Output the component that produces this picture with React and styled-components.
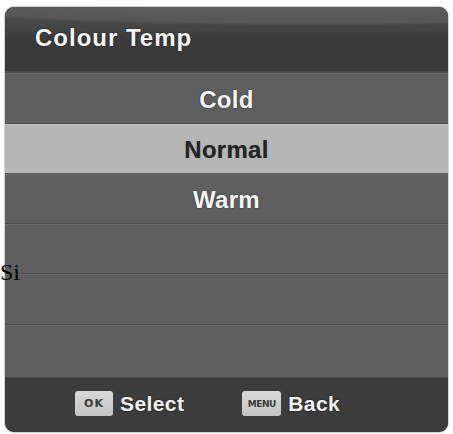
import React from "react";
import styled, { createGlobalStyle } from "styled-components";

const Global = createGlobalStyle`
  html, body { margin: 0; padding: 0; background: #ffffff; }
  body { width: 453px; height: 434px; overflow: hidden; position: relative; }
`;

const Page = styled.div`
  width: 453px;
  height: 434px;
  padding: 7px 5px 2px 5px;
  box-sizing: border-box;
  position: relative;
`;

const Panel = styled.div`
  width: 443px;
  height: 425px;
  border-radius: 9px;
  overflow: hidden;
  display: flex;
  flex-direction: column;
  background: #5f5f5f;
  box-shadow: 0 0 1px 1px rgba(120, 120, 120, 0.35);
  font-family: "Liberation Sans", Arial, sans-serif;
`;

const Header = styled.div`
  height: 66px;
  flex: none;
  display: flex;
  align-items: center;
  padding: 0 0 3px 30px;
  box-sizing: border-box;
  background:
    radial-gradient(ellipse 160% 60% at 70% -8%, #5e5e5e 0%, #575757 55%, rgba(80,80,80,0) 62%),
    linear-gradient(180deg, #505050 0%, #444 35%, #3b3b3b 50%, #393939 100%);
  border-bottom: 2px solid #4d4d4d;
`;

const Title = styled.span`
  color: #f4f4f4;
  font-size: 24px;
  font-weight: bold;
  letter-spacing: 1px;
  text-shadow: 0 0 2px rgba(0, 0, 0, 0.6);
`;

const List = styled.div`
  flex: 1;
  display: flex;
  flex-direction: column;
`;

const Row = styled.div`
  height: ${(p) => p.$h}px;
  flex: none;
  display: flex;
  align-items: center;
  justify-content: center;
  padding-top: 3px;
  box-sizing: border-box;
  background: ${(p) => (p.$active ? "#b6b6b6" : "#5f5f5f")};
  border-bottom: 1px solid ${(p) => (p.$active ? "#5a5a5a" : "#4c4c4c")};
  box-shadow: inset 0 1px 0 ${(p) => (p.$active ? "#c4c4c4" : "#6a6a6a")};
`;

const RowLabel = styled.span`
  font-size: 24px;
  font-weight: bold;
  letter-spacing: 0.3px;
  color: ${(p) => (p.$active ? "#242424" : "#f6f6f6")};
  text-shadow: ${(p) =>
    p.$active ? "0 0 1px rgba(0,0,0,0.3)" : "0 0 2px rgba(0,0,0,0.55)"};
`;

const Footer = styled.div`
  height: 54px;
  flex: none;
  display: flex;
  align-items: center;
  padding: 0 0 3px 70px;
  box-sizing: border-box;
  background: #3c3c3c;
  gap: 58px;
`;

const Hint = styled.div`
  display: flex;
  align-items: center;
  gap: 7px;
`;

const Key = styled.span`
  width: ${(p) => p.$w}px;
  height: 25px;
  border-radius: 3px;
  background: linear-gradient(180deg, #d8d8d8 0%, #c4c4c4 100%);
  display: inline-flex;
  align-items: center;
  justify-content: center;
  color: #3a3a3a;
  font-size: ${(p) => p.$fs}px;
  font-weight: bold;
  letter-spacing: ${(p) => p.$ls}px;
  font-family: "DejaVu Sans", sans-serif;
`;

const HintText = styled.span`
  color: #f2f2f2;
  font-size: 21px;
  font-weight: bold;
  letter-spacing: 0.4px;
  text-shadow: 0 0 2px rgba(0, 0, 0, 0.6);
`;

const Stray = styled.span`
  position: absolute;
  left: 0;
  top: 260px;
  font-family: "Liberation Serif", "Times New Roman", serif;
  font-size: 24px;
  line-height: 1;
  color: #000;
  z-index: 2;
`;

const rows = [
  { label: "Cold", h: 51 },
  { label: "Normal", h: 50, active: true },
  { label: "Warm", h: 50 },
  { label: "", h: 50 },
  { label: "", h: 51 },
  { label: "", h: 53 },
];

export default function App() {
  return (
    <>
      <Global />
      <Page>
        <Panel>
          <Header>
            <Title>Colour Temp</Title>
          </Header>
          <List>
            {rows.map((r, i) => (
              <Row key={i} $h={r.h} $active={r.active}>
                {r.label && <RowLabel $active={r.active}>{r.label}</RowLabel>}
              </Row>
            ))}
          </List>
          <Footer>
            <Hint>
              <Key $w={38} $fs={11} $ls={1}>OK</Key>
              <HintText>Select</HintText>
            </Hint>
            <Hint>
              <Key $w={39} $fs={9} $ls={-0.5}>MENU</Key>
              <HintText>Back</HintText>
            </Hint>
          </Footer>
        </Panel>
        <Stray>Si</Stray>
      </Page>
    </>
  );
}
